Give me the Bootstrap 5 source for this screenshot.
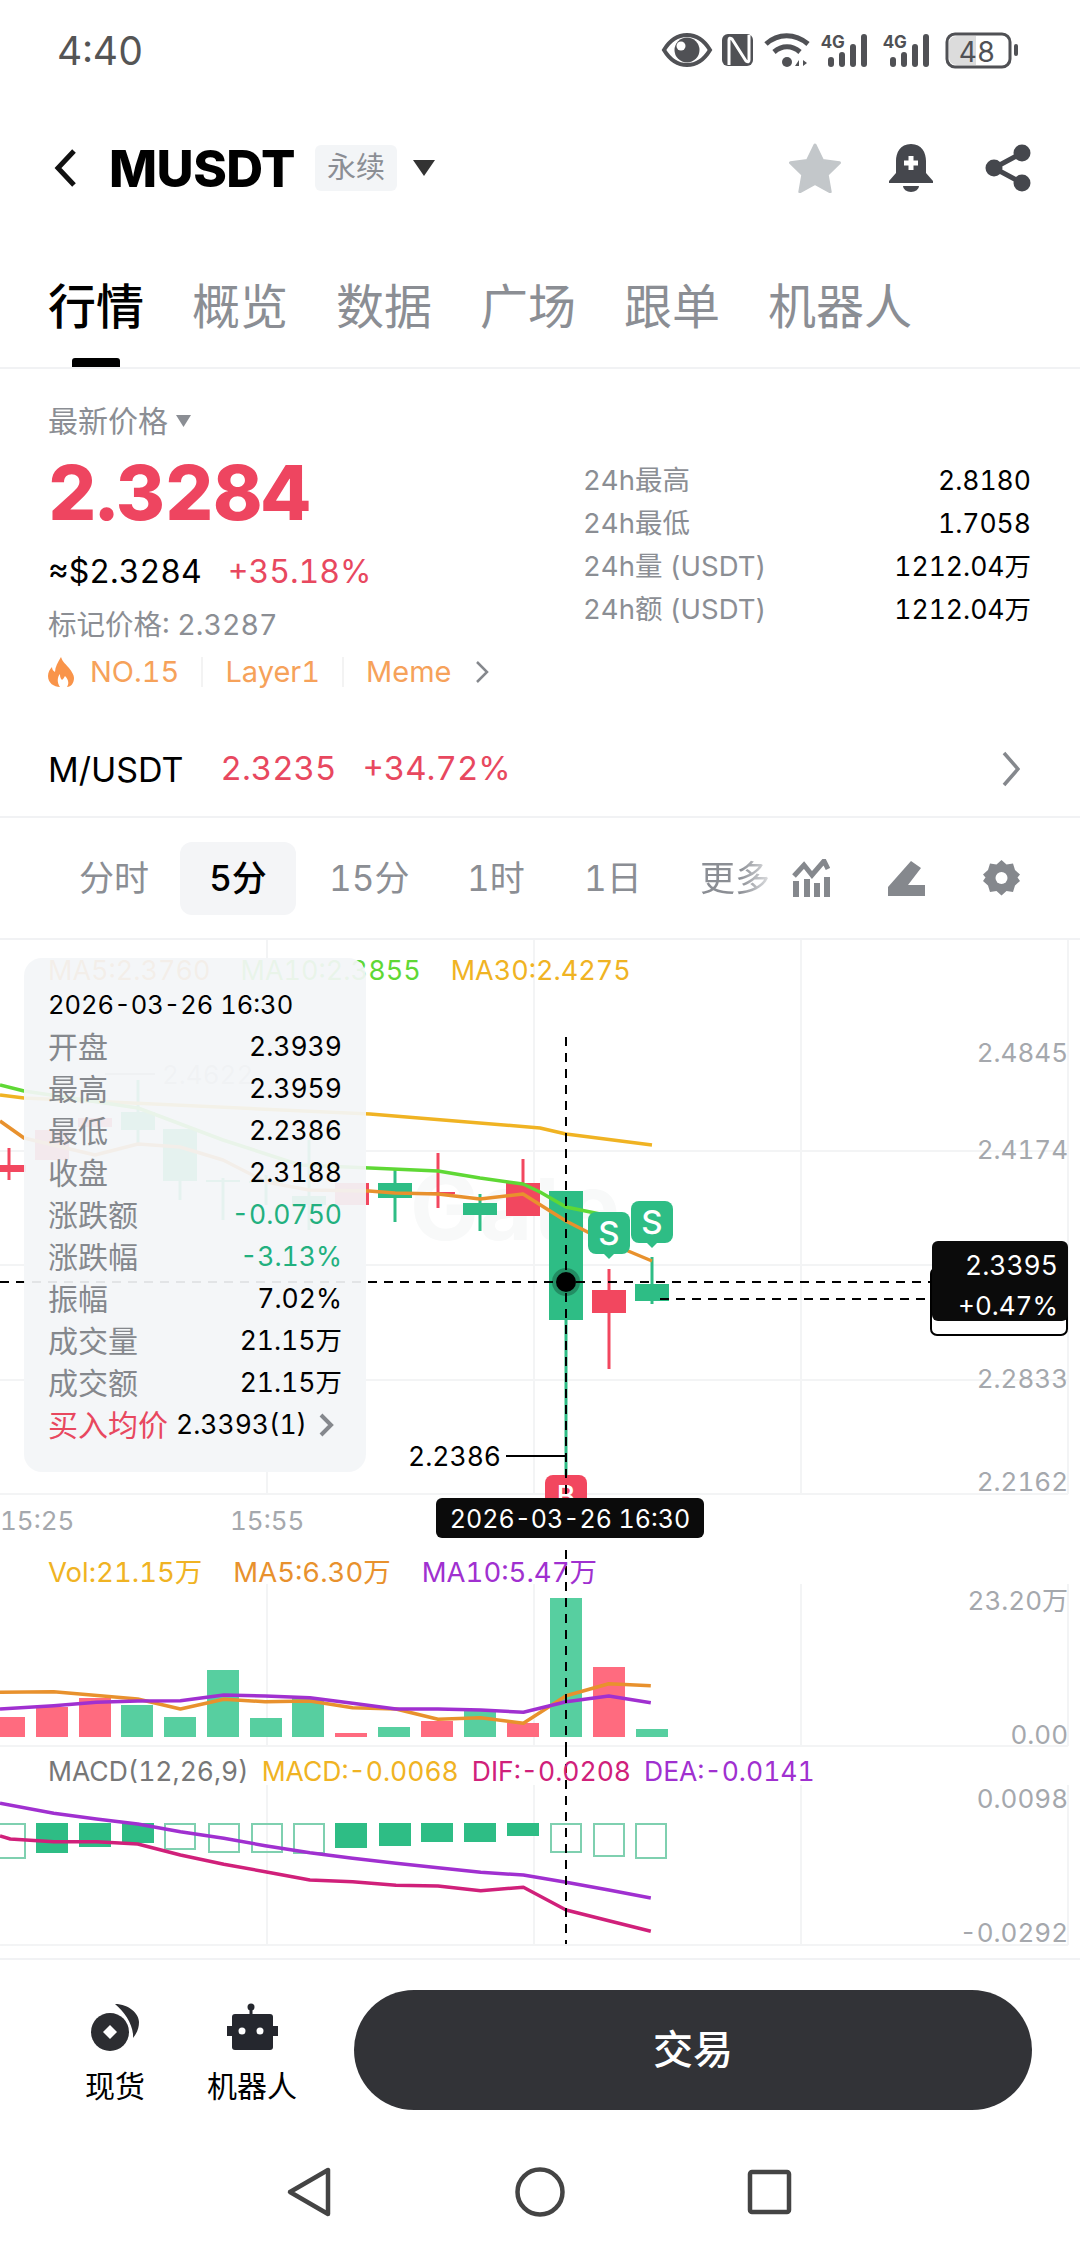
<!DOCTYPE html>
<html lang="zh">
<head>
<meta charset="UTF-8">
<title>MUSDT</title>
<link href="https://cdn.jsdelivr.net/npm/bootstrap@5.3.3/dist/css/bootstrap.min.css" rel="stylesheet">
<style>
  body { width: 1080px; height: 2244px; overflow: hidden; background: #fff; color: #000;
    font-family: Inter, "Noto Sans CJK SC", sans-serif; font-variant-numeric: tabular-nums; }
  svg { display: block; flex: none; }
  svg text { font-family: Inter, "Noto Sans CJK SC", sans-serif; font-variant-numeric: tabular-nums; }

  .status-row { height: 100px; padding: 0 62px 0 57px; color: #555; }
  .status-time { font-size: 39px; line-height: 1; }

  .head-row { height: 136px; padding: 0 48px 0 53px; }
  .head-name { font-size: 51px; font-weight: 800; line-height: 1; margin-left: 31px; letter-spacing: -.5px; }
  .head-chip { width: 82px; height: 46px; margin-left: 20px; background: #f3f5f7; border-radius: 6px;
    color: #8b8e94; font-size: 29px; }

  .tab-row { height: 133px; padding: 40px 0 0 48px; gap: 48px; border-bottom: 2px solid #f1f2f4; }
  .tab-item { font-size: 48px; line-height: 62px; color: #8b8e94; }
  .tab-on { color: #000; font-weight: 500; }
  .tab-bar { width: 48px; height: 10px; margin-top: 20px; background: #000; border-radius: 3px 3px 0 0; }

  .info-block { height: 350px; padding-left: 48px; }
  .info-left { width: 535px; padding-top: 35px; }
  .info-right { width: 448px; padding-top: 90px; }
  .txt-gray { color: #8b8e94; }
  .txt-red { color: #e8485f; }
  .txt-buy { color: #e8485f; }
  .price-label { font-size: 30px; line-height: 34px; }
  .price-big { font-size: 75px; font-weight: 800; line-height: 84px; margin-top: 13px; color: #ee4560; }
  .price-sub { font-size: 32px; line-height: 40px; margin-top: 17px; gap: 26px; }
  .price-mark { font-size: 28.5px; line-height: 36px; margin-top: 15px; }
  .tag-row { font-size: 29px; line-height: 36px; margin-top: 11px; color: #f6a25a; }
  .tag-sep { width: 2px; height: 30px; background: #f3f3f3; margin: 0 22px; }
  .stat-row { height: 43px; font-size: 27.5px; }
  .stat-val { font-size: 26.5px; }

  .pair-row { height: 94px; padding: 3px 60px 0 48px; border-bottom: 2px solid #f1f2f4; box-sizing: content-box; font-size: 34px; }
  .pair-num { font-size: 33px; }
  .period-row { height: 120px; border-bottom: 2px solid #f1f2f4; font-size: 35px; color: #8b8e94; box-sizing: content-box; white-space: nowrap; }
  .period-on { width: 116px; height: 73px; background: #f4f5f7; border-radius: 12px; color: #000; font-weight: 500; }
  .period-fade { background: linear-gradient(90deg, #8b8e94 55%, #e4e5e7 100%); -webkit-background-clip: text; background-clip: text; color: transparent; }

  .chart-pane { width: 1080px; position: relative; }
  .chart-pane > svg { position: absolute; top: 0; left: 0; overflow: visible; }
  .chart-legend { position: relative; padding-left: 48px; font-size: 27px; white-space: nowrap; }
  .legend-vol { font-size: 27.5px; }
  .legend-macd { font-size: 26.5px; }
  .pane-main { height: 602px; }
  .pane-vol { height: 206px; }
  .pane-macd { height: 212px; border-bottom: 2px solid #f1f2f4; }

  .quote-box { position: absolute; left: 24px; top: 18px; width: 342px; height: 514px; padding: 26px 24px 0 24px;
    background: rgba(243, 245, 247, .93); border-radius: 18px; }
  .quote-line { height: 42px; font-size: 26.5px; }
  .quote-line > span:first-child { font-size: 30px; color: #85888d; }
  .quote-line > span.txt-buy { color: #e8485f; }
  .quote-date { font-size: 25.5px; height: 42px; }
  .quote-more { margin-right: 8px; }
  .txt-up { color: #22b07f; }

  .trade-bar { height: 172px; padding: 30px 48px 0 0; }
  .trade-side { font-size: 30px; line-height: 40px; padding-top: 12px; }
  .trade-side svg { margin-bottom: 14px; }
  .trade-btn { width: 678px; height: 120px; background: #323337; color: #fff; border: 0; border-radius: 60px; font-size: 40px; font-weight: 500; }
  .nav-row { height: 112px; padding-top: 28px; }
</style>
</head>
<body class="d-flex flex-column">

<div class="status-row d-flex align-items-center justify-content-between">
  <span class="status-time">4:40</span>
  <svg width="358" height="40" viewBox="660 30 358 40" fill="#505155">
    <path d="M664 50c6-10 14-15 23-15s17 5 23 15c-6 10-14 15-23 15s-17-5-23-15z" fill="none" stroke="#505155" stroke-width="4"/>
    <circle cx="687" cy="50" r="12.5"/><circle cx="681" cy="46" r="4.5" fill="#fff"/>
    <rect x="722" y="34" width="31" height="32" rx="6"/>
    <path d="M729 65V40q0-3 3-1l14 22q3 2 3-1V35" fill="none" stroke="#fff" stroke-width="3"/>
    <g fill="none" stroke="#505155" stroke-width="5"><path d="M766 44c12-11 29-11 42 0"/><path d="M774 52c8-7 18-7 26 0"/></g>
    <circle cx="787" cy="62" r="5"/><path d="M799 60l-4 6h4zM803 60l4 3-4 3z"/>
    <text x="821" y="48" font-size="17" font-weight="700">4G</text>
    <rect x="828" y="57" width="6" height="10" rx="3"/><rect x="839" y="52" width="6" height="15" rx="3"/><rect x="850" y="44" width="6" height="23" rx="3"/><rect x="861" y="34" width="6" height="33" rx="3"/>
    <text x="883" y="48" font-size="17" font-weight="700">4G</text>
    <rect x="890" y="57" width="6" height="10" rx="3"/><rect x="901" y="52" width="6" height="15" rx="3"/><rect x="912" y="44" width="6" height="23" rx="3"/><rect x="923" y="34" width="6" height="33" rx="3"/>
    <rect x="947" y="34" width="63" height="33" rx="8" fill="#fff" stroke="#505155" stroke-width="3"/>
    <path d="M957 36h19v29h-19q-8 0-8-8v-13q0-8 8-8z" fill="#dcdcdc"/>
    <text x="977" y="62" font-size="28" text-anchor="middle">48</text>
    <rect x="1014" y="44" width="4" height="12" rx="2"/>
  </svg>
</div>

<div class="head-row d-flex align-items-center">
  <svg width="25" height="40" viewBox="0 0 25 40"><path d="M21 3L5 20l16 17" fill="none" stroke="#111" stroke-width="5"/></svg>
  <span class="head-name">MUSDT</span>
  <span class="head-chip d-flex align-items-center justify-content-center">永续</span>
  <svg class="ms-3" width="22" height="16" viewBox="0 0 22 16"><path d="M0 0h22L11 16z" fill="#333"/></svg>
  <svg class="ms-auto" width="54" height="50" viewBox="0 0 54 50"><path d="M27 2l7.500 15.500 17 2.300-12.300 12 3 17L27 40.500 11.800 48.800l3-17L2.500 19.800l17-2.300z" fill="#c3c7ca" stroke="#c3c7ca" stroke-width="3" stroke-linejoin="round"/></svg>
  <svg style="margin-left:46px" width="46" height="50" viewBox="0 0 46 50"><path d="M23 1C12 1 8 10 8 18v12L1 38v2h44v-2l-7-8V18C38 10 34 1 23 1z" fill="#45474d"/><path d="M15 43h16a8 6 0 0 1-16 0z" fill="#45474d"/><path d="M23 13v14M16 20h14" stroke="#fff" stroke-width="5"/></svg>
  <svg style="margin-left:50px" width="48" height="50" viewBox="0 0 48 50"><path d="M38 10L10 25l28 15" fill="none" stroke="#45474d" stroke-width="5"/><circle cx="38" cy="10" r="8.500" fill="#45474d"/><circle cx="10" cy="25" r="8.500" fill="#45474d"/><circle cx="38" cy="40" r="8.500" fill="#45474d"/></svg>
</div>

<div class="tab-row d-flex">
  <div class="tab-item tab-on d-flex flex-column align-items-center">行情<div class="tab-bar"></div></div>
  <div class="tab-item">概览</div>
  <div class="tab-item">数据</div>
  <div class="tab-item">广场</div>
  <div class="tab-item">跟单</div>
  <div class="tab-item">机器人</div>
</div>

<div class="info-block d-flex">
  <div class="info-left">
    <div class="price-label txt-gray d-flex align-items-center">最新价格<svg class="ms-2" width="15" height="12" viewBox="0 0 15 12"><path d="M0 0h15L7.500 12z" fill="#8b8e94"/></svg></div>
    <div class="price-big">2.3284</div>
    <div class="price-sub d-flex"><span>≈$2.3284</span><span class="txt-red">+35.18%</span></div>
    <div class="price-mark txt-gray">标记价格: 2.3287</div>
    <div class="tag-row d-flex align-items-center">
      <svg class="me-3" width="26" height="30" viewBox="0 0 26 30"><path d="M13 0c2 6 5 7 8 11 3 4 5 7 5 10 0 5-3 9-7 9 2-3 2-7-2-11-1 2-2 3-3 4-2-2-2-4-2-6-3 3-3 9 0 13-6 0-12-4-12-11 0-4 2-7 4-9 0 2 1 4 3 5 0-5 3-10 6-15z" fill="#f9944a"/></svg>
      <span>NO.15</span><span class="tag-sep"></span><span>Layer1</span><span class="tag-sep"></span><span>Meme</span>
      <svg class="ms-4" width="14" height="24" viewBox="0 0 14 24"><path d="M2 2l10 10L2 22" fill="none" stroke="#85888d" stroke-width="2.500"/></svg>
    </div>
  </div>
  <div class="info-right">
    <div class="stat-row d-flex align-items-center justify-content-between"><span class="txt-gray">24h最高</span><span class="stat-val">2.8180</span></div>
    <div class="stat-row d-flex align-items-center justify-content-between"><span class="txt-gray">24h最低</span><span class="stat-val">1.7058</span></div>
    <div class="stat-row d-flex align-items-center justify-content-between"><span class="txt-gray">24h量 (USDT)</span><span class="stat-val">1212.04万</span></div>
    <div class="stat-row d-flex align-items-center justify-content-between"><span class="txt-gray">24h额 (USDT)</span><span class="stat-val">1212.04万</span></div>
  </div>
</div>

<div class="pair-row d-flex align-items-center">
  <span>M/USDT</span>
  <span class="txt-red pair-num" style="margin-left:37px">2.3235</span>
  <span class="txt-red pair-num" style="margin-left:26px">+34.72%</span>
  <svg class="ms-auto" width="18" height="36" viewBox="0 0 18 36"><path d="M2 2l14 16L2 34" fill="none" stroke="#85888d" stroke-width="3.500"/></svg>
</div>

<div class="period-row d-flex align-items-center">
  <span style="margin-left:79px;width:72px">分时</span>
  <span class="period-on d-flex align-items-center justify-content-center" style="margin-left:29px">5分</span>
  <span style="margin-left:33px;width:78px">15分</span>
  <span style="margin-left:60px;width:55px">1时</span>
  <span style="margin-left:62px;width:54px">1日</span>
  <span class="period-fade" style="margin-left:62px;width:72px">更多</span>
  <svg style="margin-left:20px" width="38" height="38" viewBox="0 0 38 38" fill="#85888d"><path d="M2 17L12 6l8 10L32 2l4 8" fill="none" stroke="#85888d" stroke-width="5"/><rect x="1" y="22" width="6" height="16"/><rect x="12" y="20" width="6" height="18"/><rect x="22" y="24" width="6" height="14"/><rect x="32" y="18" width="6" height="20"/></svg>
  <svg style="margin-left:57px" width="38" height="36" viewBox="0 0 38 36" fill="#85888d"><path d="M24 1l10 7-13 17h17v11H1v-9z"/></svg>
  <svg style="margin-left:58px" width="37" height="38" viewBox="0 0 37 38"><path d="M18.500 1l5 4.500 6.500-1 2 6.500 5 4.500-2.500 3 2.500 3.500-5 4.500-2 6.500-6.500-1-5 4.500-5-4.500-6.500 1-2-6.500-5-4.500 2.500-3.500L0 15.500 5 11l2-6.500 6.500 1z" fill="#85888d"/><circle cx="18.500" cy="19" r="6" fill="#fff"/></svg>
</div>

<div class="chart-pane pane-main">
  <svg id="mainChart" width="1080" height="602" viewBox="0 940 1080 602"></svg>
  <div class="chart-legend d-flex align-items-center" style="height:62px;gap:30px">
    <span style="color:#e8912d">MA5:2.3760</span><span style="color:#5fd835">MA10:2.3855</span><span style="color:#f0b323">MA30:2.4275</span>
  </div>
  <div class="quote-box">
    <div class="quote-date d-flex align-items-center">2026-03-26 16:30</div>
    <div class="quote-line d-flex align-items-center justify-content-between"><span>开盘</span><span>2.3939</span></div>
    <div class="quote-line d-flex align-items-center justify-content-between"><span>最高</span><span>2.3959</span></div>
    <div class="quote-line d-flex align-items-center justify-content-between"><span>最低</span><span>2.2386</span></div>
    <div class="quote-line d-flex align-items-center justify-content-between"><span>收盘</span><span>2.3188</span></div>
    <div class="quote-line d-flex align-items-center justify-content-between"><span>涨跌额</span><span class="txt-up">-0.0750</span></div>
    <div class="quote-line d-flex align-items-center justify-content-between"><span>涨跌幅</span><span class="txt-up">-3.13%</span></div>
    <div class="quote-line d-flex align-items-center justify-content-between"><span>振幅</span><span>7.02%</span></div>
    <div class="quote-line d-flex align-items-center justify-content-between"><span>成交量</span><span>21.15万</span></div>
    <div class="quote-line d-flex align-items-center justify-content-between"><span>成交额</span><span>21.15万</span></div>
    <div class="quote-line d-flex align-items-center">
      <span class="txt-buy">买入均价</span>
      <span class="ms-2">2.3393(1)</span>
      <svg class="ms-auto quote-more" width="16" height="24" viewBox="0 0 16 24"><path d="M3 2l10 10L3 22" fill="none" stroke="#85888d" stroke-width="4"/></svg>
    </div>
  </div>
</div>

<div class="chart-pane pane-vol">
  <svg id="volChart" width="1080" height="206" viewBox="0 1542 1080 206"></svg>
  <div class="chart-legend legend-vol d-flex align-items-center" style="height:62px;gap:31px">
    <span style="color:#f0b323">Vol:21.15万</span><span style="color:#e8912d">MA5:6.30万</span><span style="color:#a030d0">MA10:5.47万</span>
  </div>
</div>

<div class="chart-pane pane-macd">
  <svg id="macdChart" width="1080" height="212" viewBox="0 1748 1080 212"></svg>
  <div class="chart-legend legend-macd d-flex align-items-center" style="height:48px;gap:13px">
    <span style="color:#777">MACD(12,26,9)</span><span style="color:#f0b323">MACD:-0.0068</span><span style="color:#d0207a">DIF:-0.0208</span><span style="color:#a030d0">DEA:-0.0141</span>
  </div>
</div>

<div class="trade-bar d-flex">
  <div class="trade-side d-flex flex-column align-items-center" style="margin-left:85px;width:60px">
    <svg width="52" height="50" viewBox="88 2002 52 50"><circle cx="109" cy="2032" r="19" fill="#2c2d31"/><path d="M109 2025l7 7-7 7-7-7z" fill="#fff"/><path d="M114 2004c14 0 24 10 24 18 0 6-2 11-6 16 1-12-8-26-18-34z" fill="#2c2d31"/></svg>
    <span class="text-nowrap">现货</span>
  </div>
  <div class="trade-side d-flex flex-column align-items-center" style="margin-left:62px;width:90px">
    <svg width="52" height="50" viewBox="226 2000 52 50" fill="#25272e"><circle cx="251" cy="2005" r="3.500"/><rect x="249.500" y="2005" width="3" height="8"/><rect x="232" y="2012" width="41" height="36" rx="3"/><rect x="227" y="2024" width="5" height="10"/><rect x="273" y="2024" width="5" height="10"/><circle cx="242" cy="2029" r="3.500" fill="#fff"/><circle cx="260" cy="2029" r="3.500" fill="#fff"/></svg>
    <span class="text-nowrap">机器人</span>
  </div>
  <button class="trade-btn ms-auto">交易</button>
</div>

<div class="nav-row d-flex justify-content-center">
  <svg width="560" height="60" viewBox="260 2160 560 60" fill="none" stroke="#444" stroke-width="4.500" stroke-linejoin="round">
    <path d="M328 2170v44l-38-22z"/>
    <circle cx="540" cy="2192" r="22.500"/>
    <rect x="750" y="2172" width="39" height="40" rx="2"/>
  </svg>
</div>

<script>
  const RED = '#f2475f', GREEN = '#2ebd85';
  const GRID = '#f3f4f5', AXIS = '#a5a8ad';

  const line = (pts, color, w) =>
    `<polyline points="${pts.map(p => p.join(',')).join(' ')}" fill="none" stroke="${color}" stroke-width="${w}" stroke-linejoin="round"/>`;
  const seg = (x1, y1, x2, y2, color, w, dash) =>
    `<line x1="${x1}" y1="${y1}" x2="${x2}" y2="${y2}" stroke="${color}" stroke-width="${w}" ${dash ? 'stroke-dasharray="' + dash + '"' : ''}/>`;
  const axisText = (txt, y) =>
    `<text x="1068" y="${y + 10}" font-size="26" fill="${AXIS}" text-anchor="end">${txt}</text>`;
  const grid = (hs, top, bottom) => {
    let s = '';
    hs.forEach(y => s += seg(0, y, 1068, y, GRID, 2));
    [267, 534, 801, 1068].forEach(x => s += seg(x, top, x, bottom, GRID, 2));
    return s;
  };
  // shown zoom coordinates for the lower panes: x / 1.452, y / 3 + 1530
  const zoomPts = arr => arr.map(p => [+(p[0] / 1.452).toFixed(1), +(p[1] / 3 + 1530).toFixed(1)]);

  // x, top, bottom, wickTop, wickBottom, colour
  const candles = [
    [9, 1165, 1172, 1148, 1180, RED], [52, 1130, 1160, 1130, 1160, RED], [95, 1118, 1127, 1118, 1127, RED],
    [138, 1112, 1130, 1080, 1145, GREEN], [180, 1129, 1181, 1129, 1200, GREEN], [223, 1180, 1182, 1178, 1220, GREEN],
    [266, 1181, 1183, 1175, 1205, GREEN], [309, 1196, 1205, 1140, 1230, GREEN], [352, 1183, 1205, 1183, 1205, RED],
    [395, 1183, 1198, 1170, 1222, GREEN], [438, 1192, 1194, 1153, 1208, RED], [480, 1203, 1215, 1194, 1231, GREEN],
    [523, 1183, 1216, 1159, 1216, RED], [566, 1191, 1320, 1191, 1476, GREEN], [609, 1290, 1313, 1269, 1369, RED],
    [652, 1284, 1301, 1257, 1304, GREEN]
  ];

  let m = grid([1151, 1265, 1380, 1494], 940, 1494);
  m += `<text x="410" y="1240" font-size="92" font-weight="700" fill="#f8f9f9">Gate</text>`;
  candles.forEach(c => {
    m += seg(c[0], c[3], c[0], c[4], c[5], 3);
    m += `<rect x="${c[0] - 17}" y="${c[1]}" width="34" height="${c[2] - c[1]}" fill="${c[5]}"/>`;
  });
  m += line([[0,1095],[24,1098],[370,1114],[540,1128],[566,1134],[652,1145]], '#f0b323', 3.5);
  m += line([[0,1085],[24,1091],[138,1108],[223,1140],[300,1165],[370,1168],[438,1171],[480,1178],[523,1184],[540,1192],[566,1207],[600,1214]], '#5fd835', 3.5);
  m += line([[0,1121],[24,1138],[95,1155],[138,1144],[180,1147],[223,1160],[266,1182],[309,1190],[369,1191],[395,1193],[438,1194],[480,1199],[523,1194],[566,1221],[609,1243],[652,1261]], '#e8912d', 3.5);
  m += seg(105, 1074, 155, 1074, '#bbb', 2) + `<text x="162" y="1084" font-size="26" fill="#c4c6c9">2.4622</text>`;
  m += `<text x="408" y="1466" font-size="26.500" fill="#000">2.2386</text>` + seg(506, 1456, 566, 1456, '#000', 2);

  // S markers and cut-off B marker
  [[609, 1212, GREEN, 'S'], [652, 1201, GREEN, 'S']].forEach(a => {
    m += `<rect x="${a[0] - 21}" y="${a[1]}" width="42" height="42" rx="8" fill="${a[2]}"/><path d="M${a[0] - 6} ${a[1] + 41}h12l-6 6z" fill="${a[2]}"/>`;
    m += `<text x="${a[0]}" y="${a[1] + 33}" font-size="33" font-weight="500" fill="#fff" text-anchor="middle">${a[3]}</text>`;
  });
  m += `<rect x="545" y="1475" width="42" height="42" rx="8" fill="${RED}"/><text x="566" y="1506" font-size="28" font-weight="500" fill="#fff" text-anchor="middle">B</text>`;

  m += axisText('2.4845', 1052) + axisText('2.4174', 1149) + axisText('2.2833', 1378) + axisText('2.2162', 1481);
  m += `<text x="0" y="1530" font-size="26" fill="${AXIS}">15:25</text><text x="230" y="1530" font-size="26" fill="${AXIS}">15:55</text>`;

  // crosshair
  m += seg(0, 1282, 932, 1282, '#000', 2, '9 7') + seg(660, 1299, 932, 1299, '#000', 2, '9 7');
  m += seg(566, 1037, 566, 1498, '#000', 2, '9 7');
  m += `<circle cx="566" cy="1282" r="14" fill="#000" opacity=".25"/><circle cx="566" cy="1282" r="10" fill="#000"/>`;

  // price tag
  m += `<rect x="931" y="1268" width="136" height="67" rx="6" fill="#fff" stroke="#000" stroke-width="2"/>`;
  m += `<rect x="932" y="1241" width="136" height="80" rx="6" fill="#0b0b0b"/>`;
  m += `<text x="1058" y="1275" font-size="26.500" fill="#fff" text-anchor="end">2.3395</text><text x="1058" y="1315" font-size="26" fill="#fff" text-anchor="end">+0.47%</text>`;
  m += `<rect x="436" y="1498" width="268" height="40" rx="6" fill="#0b0b0b"/><text x="570" y="1528" font-size="25" fill="#fff" text-anchor="middle">2026-03-26 16:30</text>`;
  document.getElementById('mainChart').innerHTML = m;

  // volume pane
  const VRED = '#ff6b7f', VGREEN = '#57cfa0';
  const vols = [[9,1717,VRED],[52,1707,VRED],[95,1698,VRED],[137,1705,VGREEN],[180,1717,VGREEN],[223,1670,VGREEN],[266,1718,VGREEN],[308,1698,VGREEN],[351,1733,VRED],[394,1727,VGREEN],[437,1721,VRED],[480,1711,VGREEN],[523,1723,VRED],[566,1598,VGREEN],[609,1667,VRED],[652,1729,VGREEN]];
  let v = grid([1746], 1584, 1746);
  vols.forEach(b => v += `<rect x="${b[0] - 16}" y="${b[1]}" width="32" height="${1737 - b[1]}" fill="${b[2]}"/>`);
  v += line(zoomPts([[0,487],[78,485],[200,507],[262,537],[325,508],[385,515],[450,513],[512,533],[575,537],[636,568],[698,563],[760,580],[822,497],[884,461],[945,467]]), '#e8912d', 3.5);
  v += line(zoomPts([[0,537],[78,527],[140,517],[200,513],[262,512],[325,495],[385,498],[450,503],[512,520],[575,537],[636,537],[698,540],[760,547],[822,515],[884,498],[945,518]]), '#a030d0', 3.5);
  v += axisText('23.20万', 1600) + axisText('0.00', 1734);
  v += seg(566, 1550, 566, 1748, '#000', 2, '9 7');
  document.getElementById('volChart').innerHTML = v;

  // macd pane
  const hist = [[10,1858,0],[52,1853,1],[95,1847,1],[138,1843,1],[180,1849,0],[224,1852,0],[267,1852,0],[309,1853,0],[351,1848,1],[395,1846,1],[437,1842,1],[480,1842,1],[523,1836,1],[566,1852,0],[609,1856,0],[651,1858,0]];
  let d = grid([1945], 1785, 1945);
  hist.forEach(b => {
    d += b[2]
      ? `<rect x="${b[0] - 16}" y="1823" width="32" height="${b[1] - 1823}" fill="${GREEN}"/>`
      : `<rect x="${b[0] - 15}" y="1824" width="30" height="${b[1] - 1824}" fill="none" stroke="#7fd0b0" stroke-width="2"/>`;
  });
  d += line(zoomPts([[0,820],[78,850],[140,867],[200,882],[262,905],[325,925],[385,947],[450,968],[512,985],[575,1000],[636,1013],[698,1027],[760,1035],[822,1057],[884,1080],[945,1104]]), '#a030d0', 3.5);
  d += line(zoomPts([[0,918],[15,927],[78,935],[140,935],[200,942],[262,975],[325,1003],[385,1025],[450,1050],[512,1055],[575,1066],[636,1068],[698,1082],[760,1072],[822,1140],[884,1172],[945,1204]]), '#d0207a', 3.5);
  d += axisText('0.0098', 1798) + axisText('-0.0292', 1932);
  d += seg(566, 1748, 566, 1944, '#000', 2, '9 7');
  document.getElementById('macdChart').innerHTML = d;
</script>
<script src="https://cdn.jsdelivr.net/npm/bootstrap@5.3.3/dist/js/bootstrap.bundle.min.js"></script>
</body>
</html>
